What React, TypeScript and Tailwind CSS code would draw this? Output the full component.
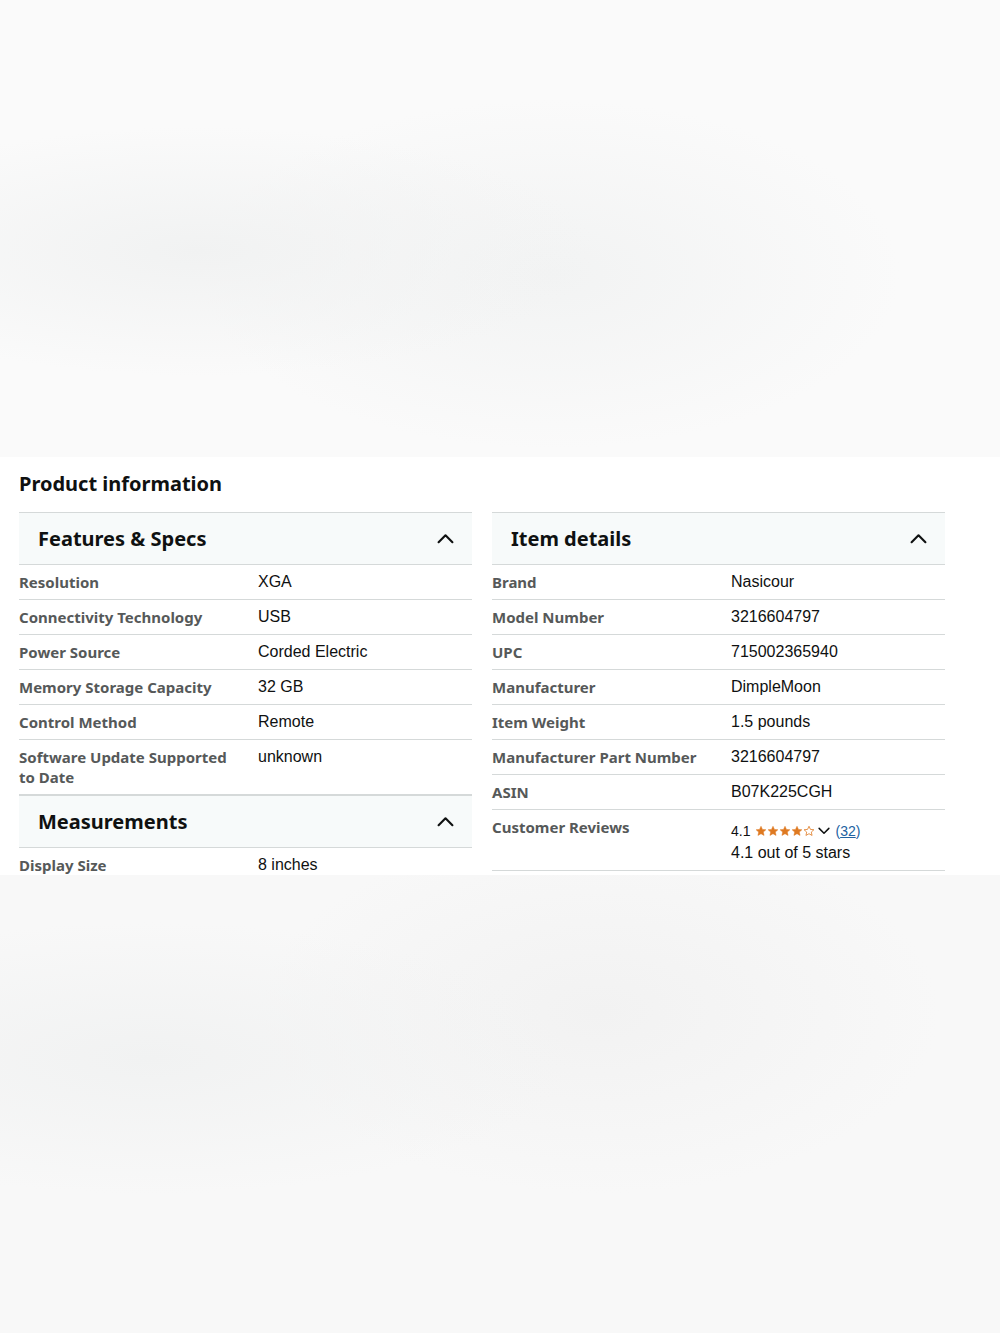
import React from "react";

type Row = { label: string; value: React.ReactNode };

const Chevron = ({ up = true, className = "" }: { up?: boolean; className?: string }) => (
  <svg viewBox="0 0 16 10" className={className} fill="none" stroke="currentColor" strokeWidth={2} strokeLinecap="round" strokeLinejoin="round">
    {up ? <path d="M1.5 8.5 8 2l6.5 6.5" /> : <path d="M1.5 1.5 8 8l6.5-6.5" />}
  </svg>
);

const Star = ({ fill }: { fill: boolean }) => (
  <svg viewBox="0 0 24 24" className="w-[12px] h-[12px]" fill={fill ? "#de7921" : "none"} stroke="#de7921" strokeWidth={fill ? 1 : 1.6} strokeLinejoin="round">
    <path d="M12 2.5l2.9 6.3 6.9.7-5.2 4.6 1.5 6.8L12 17.4l-6.1 3.5 1.5-6.8-5.2-4.6 6.9-.7z" />
  </svg>
);

const SectionHeader = ({ title }: { title: string }) => (
  <div className="flex items-center justify-between h-[53px] bg-[#f7fafa] border-t border-b border-[#d5d9d9] pl-[19px] pr-[18px]">
    <h3 className="text-[20px] font-bold text-[#0f1111] font-['Noto_Sans',sans-serif] leading-none">{title}</h3>
    <Chevron className="w-[17px] h-[11px] text-[#0f1111]" />
  </div>
);

const SpecRow = ({ label, value }: Row) => (
  <div className="flex items-start border-b border-[#d5d9d9] py-[7px]">
    <div className="w-[239px] shrink-0 pr-[12px] text-[15px] leading-[20px] font-bold text-[#565959] font-['Noto_Sans',sans-serif]">
      {label}
    </div>
    <div className="flex-1 text-[16px] leading-[20px] text-[#0f1111] font-['Liberation_Sans',Arial,sans-serif]">{value}</div>
  </div>
);

const features: Row[] = [
  { label: "Resolution", value: "XGA" },
  { label: "Connectivity Technology", value: "USB" },
  { label: "Power Source", value: "Corded Electric" },
  { label: "Memory Storage Capacity", value: "32 GB" },
  { label: "Control Method", value: "Remote" },
  { label: "Software Update Supported to Date", value: "unknown" },
];

const measurements: Row[] = [{ label: "Display Size", value: "8 inches" }];

const Reviews = () => (
  <div className="flex flex-col">
    <div className="flex items-center gap-[5px] text-[14px] leading-[20px] pt-[4px]">
      <span>4.1</span>
      <span className="flex items-center">
        {[true, true, true, true, false].map((f, i) => (
          <Star key={i} fill={f} />
        ))}
        <Chevron up={false} className="w-[12px] h-[8px] ml-[3px] text-[#0f1111]" />
      </span>
      <span className="text-[#2162a1]">
        (<span className="underline">32</span>)
      </span>
    </div>
    <div className="leading-[20px] mt-[2px]">4.1 out of 5 stars</div>
  </div>
);

const details: Row[] = [
  { label: "Brand", value: "Nasicour" },
  { label: "Model Number", value: "3216604797" },
  { label: "UPC", value: "715002365940" },
  { label: "Manufacturer", value: "DimpleMoon" },
  { label: "Item Weight", value: "1.5 pounds" },
  { label: "Manufacturer Part Number", value: "3216604797" },
  { label: "ASIN", value: "B07K225CGH" },
  { label: "Customer Reviews", value: <Reviews /> },
];

export default function App() {
  return (
    <div className="w-[1000px] min-h-[1333px] bg-[#f7f7f7] flex flex-col">
      <div className="h-[457px] bg-[radial-gradient(ellipse_at_20%_55%,#f1f2f2,transparent_35%),radial-gradient(ellipse_at_55%_60%,#f2f3f3,transparent_45%)] bg-[#fafafa]" />
      <section className="h-[418px] bg-white overflow-hidden px-[19px] pt-[15px]">
        <h2 className="text-[20px] font-bold text-[#0f1111] font-['Noto_Sans',sans-serif] leading-[24px]">Product information</h2>
        <div className="flex gap-[20px] mt-[16px]">
          <div className="w-[453px]">
            <SectionHeader title="Features & Specs" />
            {features.map((r) => (
              <SpecRow key={r.label} {...r} />
            ))}
            <SectionHeader title="Measurements" />
            {measurements.map((r) => (
              <SpecRow key={r.label} {...r} />
            ))}
          </div>
          <div className="w-[453px]">
            <SectionHeader title="Item details" />
            {details.map((r) => (
              <SpecRow key={r.label} {...r} />
            ))}
          </div>
        </div>
      </section>
      <div className="flex-1 bg-[radial-gradient(ellipse_at_15%_40%,#f1f2f2,transparent_35%),radial-gradient(ellipse_at_60%_30%,#f2f2f2,transparent_40%)] bg-[#f8f8f8]" />
    </div>
  );
}
